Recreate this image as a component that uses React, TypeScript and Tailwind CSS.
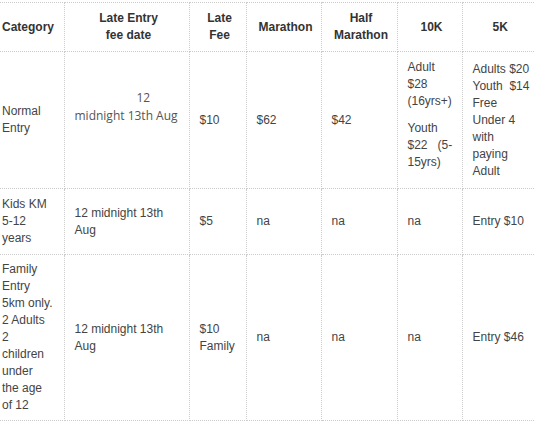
import type { ReactNode } from 'react';

const base = 'border-y border-r border-dotted border-[#cccccc] align-middle pr-[6px] py-[6px] leading-[17px]';
const cell = `${base} border-l pl-[10px]`;
const first = `${base} border-l-0 pl-[2px]`;
const last = 'border-y border-l border-r-0 border-dotted border-[#cccccc] align-middle pl-[10px] pr-[6px] py-[6px] leading-[17px]';

function Lines({ items }: { items: ReactNode[] }) {
  return (
    <>
      {items.map((t, i) => (
        <div key={i} className="whitespace-nowrap">{t}</div>
      ))}
    </>
  );
}

export default function App() {
  return (
    <div className="w-[534px] h-[421px] overflow-hidden bg-white pt-[2px] font-['Liberation_Sans',Arial,sans-serif] text-[12px] text-[#444]">
      <table className="table-fixed border-collapse w-[534px]">
        <colgroup>
          <col className="w-[64px]" />
          <col className="w-[125px]" />
          <col className="w-[57px]" />
          <col className="w-[75px]" />
          <col className="w-[76px]" />
          <col className="w-[65px]" />
          <col className="w-[72px]" />
        </colgroup>
        <thead>
          <tr className="h-[49px] font-bold text-[#333] text-center">
            <th className={`${first} text-left`}>Category</th>
            <th className={cell}><Lines items={['Late Entry', 'fee date']} /></th>
            <th className={cell}><Lines items={['Late', 'Fee']} /></th>
            <th className={cell}>Marathon</th>
            <th className={cell}><Lines items={['Half', 'Marathon']} /></th>
            <th className={cell}>10K</th>
            <th className={last}>5K</th>
          </tr>
        </thead>
        <tbody>
          <tr className="h-[137px]">
            <td className={first}><Lines items={['Normal', 'Entry']} /></td>
            <td className={cell}>
              <div className="pb-[27px] font-['Open_Sans',sans-serif] text-[12px] leading-[18px] text-[#555]">
                <div className="pl-[62px]">12</div>
                <div className="whitespace-nowrap">midnight 13th Aug</div>
              </div>
            </td>
            <td className={cell}>$10</td>
            <td className={cell}>$62</td>
            <td className={cell}>$42</td>
            <td className={cell}>
              <div className="mb-[10px]"><Lines items={['Adult', '$28', '(16yrs+)']} /></div>
              <div className="mb-[10px]"><Lines items={['Youth', '$22\u00a0\u00a0 (5-', '15yrs)']} /></div>
            </td>
            <td className={last}>
              <Lines items={['Adults $20', 'Youth\u00a0 $14', 'Free', 'Under 4', 'with', 'paying', 'Adult']} />
            </td>
          </tr>
          <tr className="h-[66px]">
            <td className={first}><Lines items={['Kids KM', '5-12', 'years']} /></td>
            <td className={cell}><Lines items={['12 midnight 13th', 'Aug']} /></td>
            <td className={cell}>$5</td>
            <td className={cell}>na</td>
            <td className={cell}>na</td>
            <td className={cell}>na</td>
            <td className={last}>Entry $10</td>
          </tr>
          <tr className="h-[166px]">
            <td className={first}>
              <Lines items={['Family', 'Entry', '5km only.', '2 Adults', '2', 'children', 'under', 'the age', 'of 12']} />
            </td>
            <td className={cell}><Lines items={['12 midnight 13th', 'Aug']} /></td>
            <td className={cell}><Lines items={['$10', 'Family']} /></td>
            <td className={cell}>na</td>
            <td className={cell}>na</td>
            <td className={cell}>na</td>
            <td className={last}>Entry $46</td>
          </tr>
        </tbody>
      </table>
    </div>
  );
}
